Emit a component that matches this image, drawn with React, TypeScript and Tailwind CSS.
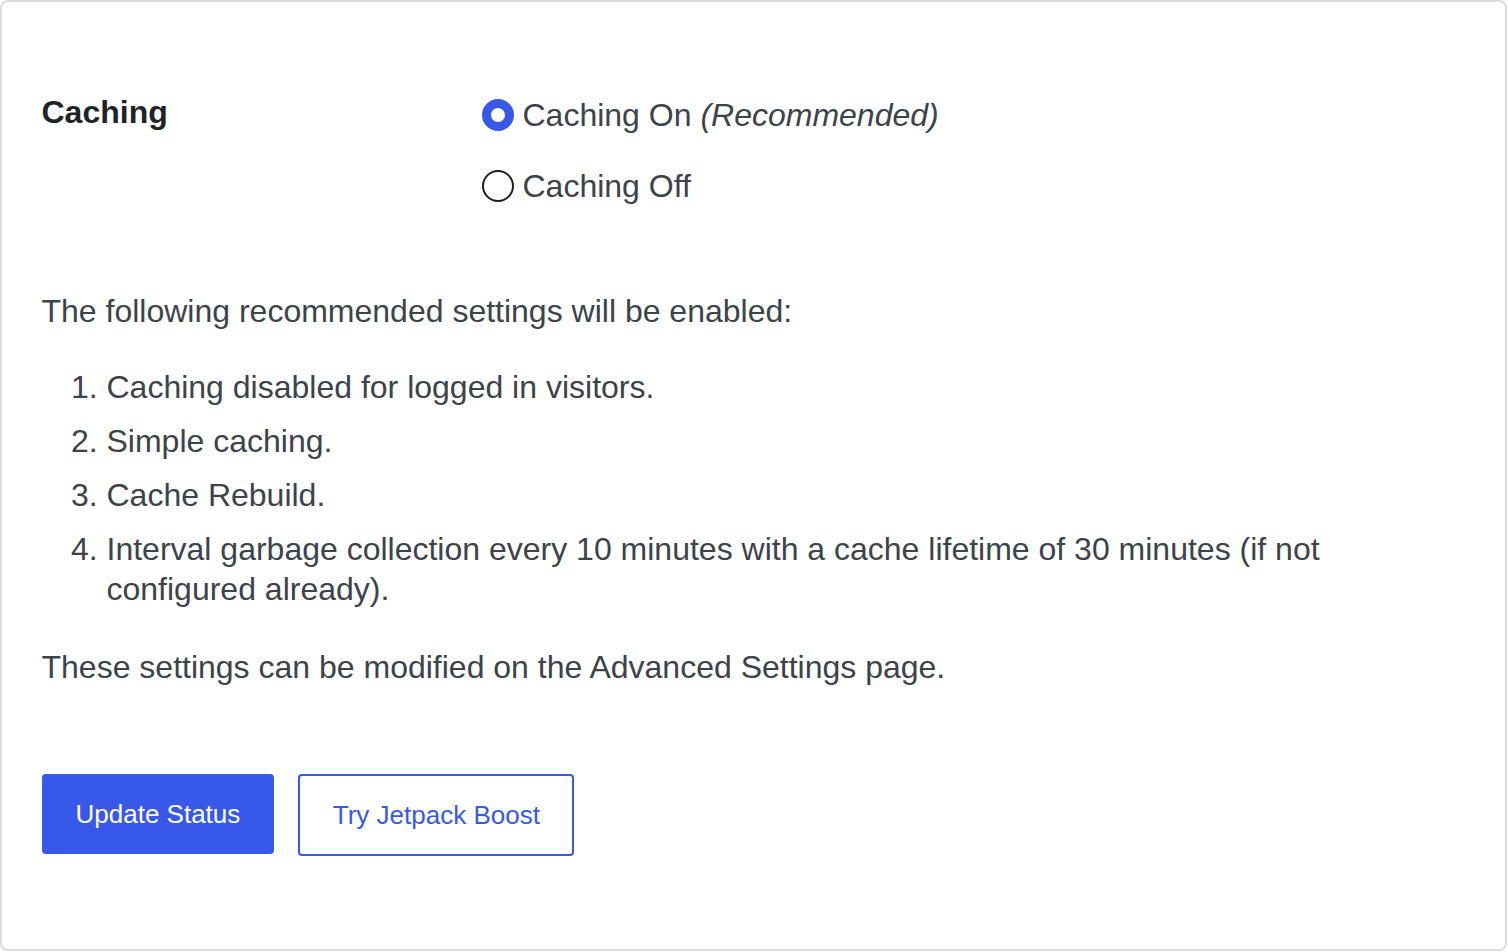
import { useState } from 'react';

const BLUE = '#3858e9';

function Radio({ checked, onClick, children }: { checked: boolean; onClick: () => void; children: React.ReactNode }) {
  return (
    <label className="flex h-[40px] cursor-pointer items-center" onClick={onClick}>
      <span
        className={
          checked
            ? 'box-border block h-[32px] w-[32px] shrink-0 rounded-full border-[9px] border-[#3858e9] bg-white'
            : 'box-border block h-[32px] w-[32px] shrink-0 rounded-full border-2 border-[#1e1e1e] bg-white'
        }
      />
      <span className="ml-[9px] text-[32px] leading-[40px] text-[#3c434a]">{children}</span>
    </label>
  );
}

const SETTINGS = [
  'Caching disabled for logged in visitors.',
  'Simple caching.',
  'Cache Rebuild.',
  'Interval garbage collection every 10 minutes with a cache lifetime of 30 minutes (if not configured already).',
];

export default function App() {
  const [on, setOn] = useState(true);

  return (
    <div className="h-[952px] w-[1508px] bg-white font-['Liberation_Sans',Arial,sans-serif]">
      <div className="box-border h-[951px] w-[1507px] rounded-[8px] border-2 border-[#dcdcde] bg-white pl-[39.5px] pr-[40px]">
        <div className="flex">
          <div className="w-[440px] shrink-0 pt-[90px]">
            <h2 className="text-[32px] font-bold leading-[40px] text-[#1d2327]">Caching</h2>
          </div>
          <div className="flex flex-col gap-[31px] pt-[93px]">
            <Radio checked={on} onClick={() => setOn(true)}>
              Caching On <em>(Recommended)</em>
            </Radio>
            <Radio checked={!on} onClick={() => setOn(false)}>
              Caching Off
            </Radio>
          </div>
        </div>

        <p className="mt-[85px] text-[32px] leading-[40px] text-[#3c434a]">
          The following recommended settings will be enabled:
        </p>
        <ol className="mt-[36px] flex list-decimal flex-col gap-[14px] pl-[65px] text-[32px] leading-[40px] text-[#3c434a]">
          {SETTINGS.map((s) => (
            <li key={s}>{s}</li>
          ))}
        </ol>
        <p className="mt-[38px] text-[32px] leading-[40px] text-[#3c434a]">
          These settings can be modified on the Advanced Settings page.
        </p>

        <div className="mt-[87px] flex items-start gap-[24px]">
          <button
            type="button"
            className="box-border h-[80px] rounded-[4px] border-2 border-[#3858e9] bg-[#3858e9] px-[32px] text-[26px] text-white"
          >
            Update Status
          </button>
          <button
            type="button"
            className="box-border h-[82px] rounded-[4px] border-2 bg-white px-[32.5px] text-[26px]"
            style={{ borderColor: BLUE, color: BLUE }}
          >
            Try Jetpack Boost
          </button>
        </div>
      </div>
    </div>
  );
}
